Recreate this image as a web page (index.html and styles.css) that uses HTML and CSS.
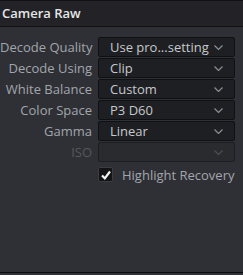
FILE: index.html
```html
<!DOCTYPE html>
<html>
<head>
<meta charset="utf-8">
<link rel="stylesheet" href="styles.css">
</head>
<body>
<div class="panel">
  <div class="header">Camera Raw</div>
  <div class="rows">
    <div class="row">
      <div class="label">Decode Quality</div>
      <div class="select"><span class="val">Use pro...setting</span><svg class="chev" width="9" height="5" viewBox="0 0 9 5"><path d="M0.5 0.5 L4.5 4.5 L8.5 0.5" fill="none" stroke="#8a8d92" stroke-width="1.2"/></svg></div>
    </div>
    <div class="row">
      <div class="label">Decode Using</div>
      <div class="select"><span class="val">Clip</span><svg class="chev" width="9" height="5" viewBox="0 0 9 5"><path d="M0.5 0.5 L4.5 4.5 L8.5 0.5" fill="none" stroke="#8a8d92" stroke-width="1.2"/></svg></div>
    </div>
    <div class="row">
      <div class="label">White Balance</div>
      <div class="select"><span class="val">Custom</span><svg class="chev" width="9" height="5" viewBox="0 0 9 5"><path d="M0.5 0.5 L4.5 4.5 L8.5 0.5" fill="none" stroke="#8a8d92" stroke-width="1.2"/></svg></div>
    </div>
    <div class="row">
      <div class="label">Color Space</div>
      <div class="select"><span class="val">P3 D60</span><svg class="chev" width="9" height="5" viewBox="0 0 9 5"><path d="M0.5 0.5 L4.5 4.5 L8.5 0.5" fill="none" stroke="#8a8d92" stroke-width="1.2"/></svg></div>
    </div>
    <div class="row">
      <div class="label">Gamma</div>
      <div class="select"><span class="val">Linear</span><svg class="chev" width="9" height="5" viewBox="0 0 9 5"><path d="M0.5 0.5 L4.5 4.5 L8.5 0.5" fill="none" stroke="#8a8d92" stroke-width="1.2"/></svg></div>
    </div>
    <div class="row">
      <div class="label disabled">ISO</div>
      <div class="select off"><span class="val"></span><svg class="chev" width="9" height="5" viewBox="0 0 9 5"><path d="M0.5 0.5 L4.5 4.5 L8.5 0.5" fill="none" stroke="#4c4e53" stroke-width="1.2"/></svg></div>
    </div>
    <div class="row check-row">
      <div class="label"></div>
      <div class="check-wrap">
        <span class="box"><svg width="12" height="12" viewBox="0 0 12 12"><path d="M2 6.5 L4.8 9.3 L10 2.5" fill="none" stroke="#f4f4f4" stroke-width="2.2"/></svg></span>
        <span class="check-label">Highlight Recovery</span>
      </div>
    </div>
  </div>
  <div class="spacer"></div>
  <div class="footer"></div>
</div>
</body>
</html>
```

FILE: styles.css
```css
* { box-sizing: border-box; }
html, body { margin: 0; padding: 0; }
body {
  width: 243px;
  height: 275px;
  background: #2f3035;
  font-family: "Open Sans", "Noto Sans", sans-serif;
  overflow: hidden;
}
.panel {
  display: flex;
  flex-direction: column;
  height: 275px;
}
.header {
  height: 27px;
  border-top: 1px solid #111113;
  border-bottom: 1px solid #111113;
  background: #232327;
  color: #e6e6e6;
  font-size: 13px;
  font-weight: 600;
  line-height: 25px;
  padding-left: 2px;
}
.rows {
  display: flex;
  flex-direction: column;
  gap: 1px;
  padding-top: 10px;
}
.row {
  display: flex;
  align-items: center;
  height: 20px;
}
.label {
  width: 92px;
  text-align: right;
  color: #a2a6ac;
  font-size: 13px;
  margin-right: 6px;
  white-space: nowrap;
}
.label.disabled { color: #55585d; }
.select {
  width: 137px;
  height: 20px;
  background: #1e1f22;
  border: 1px solid #0f1011;
  border-radius: 2px;
  display: flex;
  align-items: center;
  padding-left: 11px;
  padding-right: 11px;
}
.select .val {
  flex: 1;
  color: #c6c8cc;
  font-size: 13px;
  white-space: nowrap;
}
.select.off {
  background: #2a2b2f;
  border-color: #1d1e21;
}
.chev { display: block; }
.check-row { margin-top: 1px; height: 21px; }
.check-wrap {
  display: flex;
  align-items: center;
}
.box {
  width: 15px;
  height: 15px;
  background: #141416;
  border: 1px solid #3c3d42;
  border-radius: 2px;
  display: flex;
  align-items: center;
  justify-content: center;
  margin-right: 9px;
}
.box svg { display: block; }
.check-label {
  color: #a2a6ac;
  font-size: 13px;
  white-space: nowrap;
}
.spacer { flex: 1; }
.footer {
  height: 3px;
  border-top: 1px solid #0c0c0e;
  background: #2f3035;
}
```
